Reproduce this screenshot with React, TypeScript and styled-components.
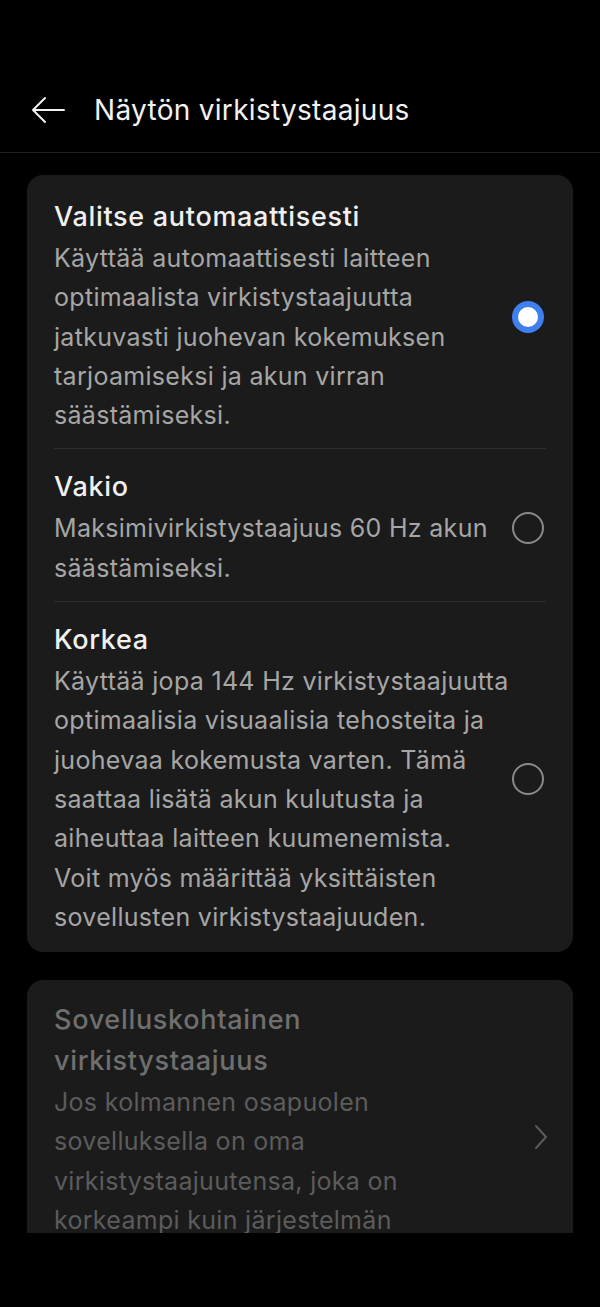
import React from 'react';
import styled, { createGlobalStyle } from 'styled-components';

const GlobalStyle = createGlobalStyle`
    html, body {
        margin: 0;
        padding: 0;
        background: #000;
    }
    body {
        font-family: Inter, Roboto, "Noto Sans", "Liberation Sans", sans-serif;
        -webkit-font-smoothing: antialiased;
    }
`;

const Screen = styled.div`
    width: 600px;
    height: 1307px;
    background: #000;
    display: flex;
    flex-direction: column;
`;

// the list scrolls under the navigation bar, so it is clipped here
const Viewport = styled.div`
    height: 1233px;
    overflow: hidden;
    display: flex;
    flex-direction: column;
`;

const Header = styled.header`
    height: 153px;
    box-sizing: border-box;
    padding: 86px 0 0 30px;
    display: flex;
    align-items: flex-start;
    border-bottom: 1px solid #1f1f1f;
    flex-shrink: 0;
`;

const BackButton = styled.button`
    width: 36px;
    height: 36px;
    margin-top: 6px;
    padding: 0;
    border: none;
    background: none;
    display: flex;
    align-items: center;
    justify-content: center;
`;

const Title = styled.h1`
    margin: 0 0 0 28px;
    font-size: 28px;
    line-height: 48px;
    font-weight: 400;
    color: #f2f2f2;
    letter-spacing: 0.3px;
`;

const Content = styled.main`
    padding: 22px 27px 0 27px;
    display: flex;
    flex-direction: column;
    gap: 28px;
`;

const Card = styled.section`
    background: #1b1b1b;
    border-radius: 16px;
    padding: 0 27px;
`;

const Row = styled.div<{ $first?: boolean; $last?: boolean }>`
    display: flex;
    align-items: center;
    padding-top: ${(p) => (p.$first ? '23px' : '19px')};
    padding-bottom: ${(p) => (p.$last ? '15px' : '13px')};
    border-bottom: ${(p) => (p.$last ? 'none' : '1px solid #2e2e2e')};
`;

const Texts = styled.div`
    flex: 1;
    min-width: 0;
`;

const RowTitle = styled.div<{ $dim?: boolean }>`
    font-size: 27px;
    font-weight: 500;
    line-height: ${(p) => (p.$dim ? '41px' : '38px')};
    color: ${(p) => (p.$dim ? '#6f6f6f' : '#f0f0f0')};
    margin-bottom: ${(p) => (p.$dim ? '2px' : '3px')};
    letter-spacing: 0.7px;
`;

const RowDesc = styled.div<{ $dim?: boolean }>`
    font-size: 25px;
    line-height: 39.3px;
    color: ${(p) => (p.$dim ? '#5c5c5c' : '#a6a6a6')};
    letter-spacing: 0.3px;
    white-space: nowrap;
`;

const Radio = styled.span<{ $checked?: boolean }>`
    width: 32px;
    height: 32px;
    box-sizing: border-box;
    border-radius: 50%;
    flex-shrink: 0;
    margin-left: 12px;
    margin-right: 2px;
    border: ${(p) => (p.$checked ? '6px solid #3f7ff0' : '2px solid #8a8a8a')};
    background: ${(p) => (p.$checked ? '#ffffff' : 'transparent')};
`;

const Chevron = styled.span`
    display: flex;
    flex-shrink: 0;
    margin-left: 12px;
    margin-right: -2px;
    margin-top: 34px;
`;

type Option = { title: string; lines: string[]; checked?: boolean };

const options: Option[] = [
    {
        title: 'Valitse automaattisesti',
        lines: [
            'Käyttää automaattisesti laitteen',
            'optimaalista virkistystaajuutta',
            'jatkuvasti juohevan kokemuksen',
            'tarjoamiseksi ja akun virran',
            'säästämiseksi.',
        ],
        checked: true,
    },
    {
        title: 'Vakio',
        lines: ['Maksimivirkistystaajuus 60 Hz akun', 'säästämiseksi.'],
    },
    {
        title: 'Korkea',
        lines: [
            'Käyttää jopa 144 Hz virkistystaajuutta',
            'optimaalisia visuaalisia tehosteita ja',
            'juohevaa kokemusta varten. Tämä',
            'saattaa lisätä akun kulutusta ja',
            'aiheuttaa laitteen kuumenemista.',
            'Voit myös määrittää yksittäisten',
            'sovellusten virkistystaajuuden.',
        ],
    },
];

const appLines = [
    'Jos kolmannen osapuolen',
    'sovelluksella on oma',
    'virkistystaajuutensa, joka on',
    'korkeampi kuin järjestelmän',
];

const Lines = ({ lines }: { lines: string[] }) => (
    <>
        {lines.map((l, i) => (
            <React.Fragment key={i}>
                {l}
                {i < lines.length - 1 && <br />}
            </React.Fragment>
        ))}
    </>
);

const App = (): React.ReactElement => {
    return (
        <>
            <GlobalStyle />
            <Screen>
                <Viewport>
                    <Header>
                        <BackButton aria-label="Takaisin">
                            <svg width="36" height="30" viewBox="0 0 36 30" fill="none">
                                <path d="M34 15H3M15 3L3 15l12 12" stroke="#f2f2f2" strokeWidth="2" strokeLinecap="round" strokeLinejoin="round" />
                            </svg>
                        </BackButton>
                        <Title>Näytön virkistystaajuus</Title>
                    </Header>
                    <Content>
                        <Card>
                            {options.map((o, i) => (
                                <Row key={o.title} $first={i === 0} $last={i === options.length - 1}>
                                    <Texts>
                                        <RowTitle>{o.title}</RowTitle>
                                        <RowDesc>
                                            <Lines lines={o.lines} />
                                        </RowDesc>
                                    </Texts>
                                    <Radio $checked={o.checked} />
                                </Row>
                            ))}
                        </Card>
                        <Card>
                            <Row $last>
                                <Texts>
                                    <RowTitle $dim>
                                        Sovelluskohtainen
                                        <br />
                                        virkistystaajuus
                                    </RowTitle>
                                    <RowDesc $dim>
                                        <Lines lines={appLines} />
                                    </RowDesc>
                                </Texts>
                                <Chevron>
                                    <svg width="14" height="26" viewBox="0 0 14 26" fill="none">
                                        <path d="M2 2l10 11L2 24" stroke="#5a5a5a" strokeWidth="2" strokeLinecap="round" strokeLinejoin="round" />
                                    </svg>
                                </Chevron>
                            </Row>
                        </Card>
                    </Content>
                </Viewport>
            </Screen>
        </>
    );
};

export default App;
